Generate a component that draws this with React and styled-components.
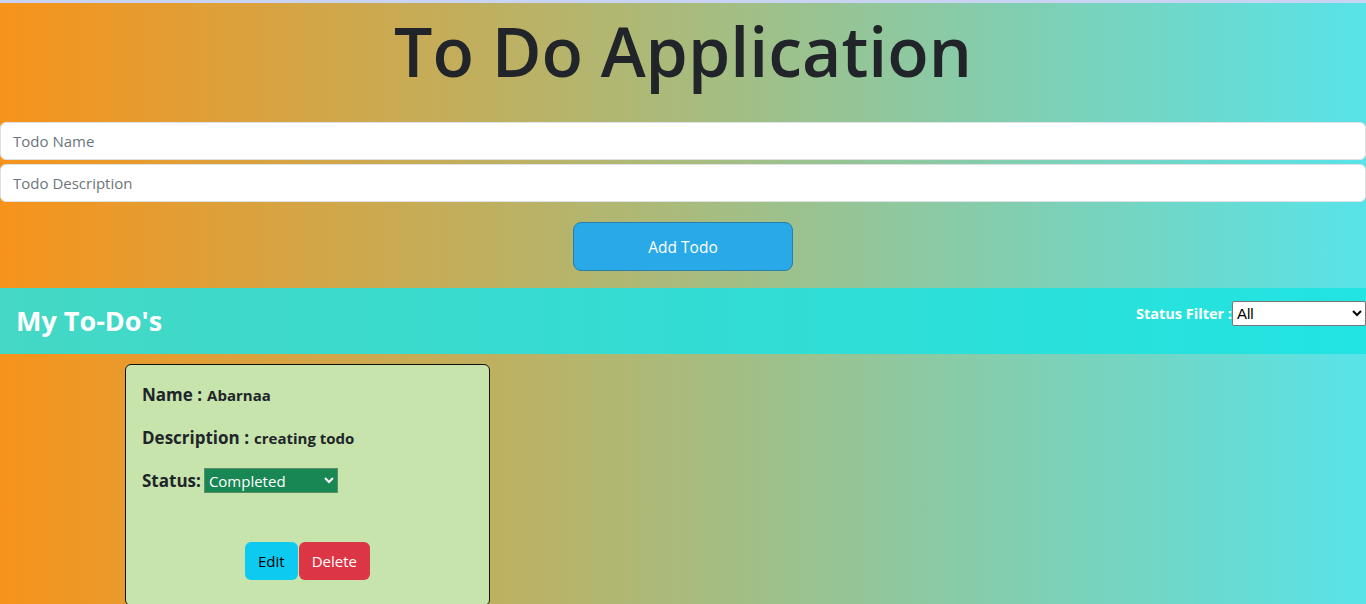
import React from "react";
import styled, { createGlobalStyle } from "styled-components";

const Global = createGlobalStyle`
  html, body { margin: 0; padding: 0; }
  body {
    font-family: "Open Sans", "Noto Sans", sans-serif;
    color: #212529;
    background: #fff;
  }
  * { box-sizing: border-box; }
`;

const Page = styled.div`
  min-height: 604px;
  border-top: 3px solid #c8d4f2;
  background: linear-gradient(to right, #f7931a 0%, #a9bb7c 50%, #58e3e8 100%);
  overflow: hidden;
`;

const Title = styled.h1`
  margin: 8px 0 32px;
  font-size: 68px;
  font-weight: 600;
  line-height: 79px;
  text-align: center;
  color: #212529;
  letter-spacing: 0;
`;

const Fields = styled.div`
  display: flex;
  flex-direction: column;
  gap: 4px;
`;

const Input = styled.input`
  display: block;
  width: 100%;
  height: 38px;
  padding: 6px 12px;
  font-family: inherit;
  font-size: 15px;
  color: #212529;
  background: #fff;
  border: 1px solid #dee2e6;
  border-radius: 6px;
  outline: none;
  &::placeholder { color: #6c757d; }
`;

const ButtonRow = styled.div`
  display: flex;
  justify-content: center;
  padding: 20px 0 17px;
`;

const AddButton = styled.button`
  width: 220px;
  height: 49px;
  font-family: inherit;
  font-size: 15.5px;
  color: #fff;
  background: #29a9e8;
  border: 1px solid #2a7fa8;
  border-radius: 8px;
`;

const ListHeader = styled.div`
  display: flex;
  justify-content: space-between;
  align-items: flex-start;
  height: 66px;
  background: linear-gradient(to right, #44d8c5 0%, #33dcd3 50%, #22e4e2 100%);
`;

const ListTitle = styled.h2`
  margin: 0;
  padding-left: 16px;
  font-size: 27px;
  font-weight: 700;
  line-height: 66px;
  color: #fff;
`;

const Filter = styled.label`
  display: flex;
  align-items: center;
  margin-top: 13px;
  font-size: 14.5px;
  font-weight: 700;
  color: #fff;
`;

const FilterSelect = styled.select`
  width: 134px;
  height: 25px;
  font-family: "Liberation Sans", Arial, sans-serif;
  font-size: 15px;
  color: #000;
  background: #fff;
  border: 1px solid #767676;
  border-radius: 2px;
`;

const Cards = styled.div`
  padding: 10px 0 0 125px;
`;

const Card = styled.div`
  width: 365px;
  height: 242px;
  padding: 16px;
  background: #c7e4ad;
  border: 1px solid #111;
  border-radius: 6px;
`;

const Line = styled.p`
  display: flex;
  align-items: center;
  margin: 0 0 16px;
  min-height: 27px;
  font-size: 17px;
  font-weight: 700;
  color: #212529;
`;

const Value = styled.span`
  margin-left: 5px;
  font-size: 15px;
  font-weight: 700;
`;

const StatusSelect = styled.select`
  margin-left: 3px;
  width: 134px;
  height: 25px;
  font-family: inherit;
  font-size: 15px;
  color: #fff;
  background: #198754;
  border: 1px solid #5a8f6a;
`;

const Actions = styled.div`
  display: flex;
  justify-content: center;
  gap: 1px;
  margin-top: 48px;
`;

const ActionButton = styled.button`
  height: 38px;
  padding: 0 13px;
  font-family: inherit;
  font-size: 15px;
  color: ${p => (p.$variant === "danger" ? "#fff" : "#000")};
  background: ${p => (p.$variant === "danger" ? "#dc3545" : "#0dcaf0")};
  border: none;
  border-radius: 6px;
`;

export default function App() {
  return (
    <>
      <Global />
      <Page>
        <Title>To Do Application</Title>
        <Fields>
          <Input placeholder="Todo Name" />
          <Input placeholder="Todo Description" />
        </Fields>
        <ButtonRow>
          <AddButton>Add Todo</AddButton>
        </ButtonRow>
        <ListHeader>
          <ListTitle>My To-Do's</ListTitle>
          <Filter>
            Status Filter :
            <FilterSelect defaultValue="All">
              <option>All</option>
              <option>Completed</option>
              <option>Not Completed</option>
            </FilterSelect>
          </Filter>
        </ListHeader>
        <Cards>
          <Card>
            <Line>Name :<Value>Abarnaa</Value></Line>
            <Line>Description :<Value>creating todo</Value></Line>
            <Line>
              Status:
              <StatusSelect defaultValue="Completed">
                <option>Completed</option>
                <option>Not Completed</option>
              </StatusSelect>
            </Line>
            <Actions>
              <ActionButton>Edit</ActionButton>
              <ActionButton $variant="danger">Delete</ActionButton>
            </Actions>
          </Card>
        </Cards>
      </Page>
    </>
  );
}
